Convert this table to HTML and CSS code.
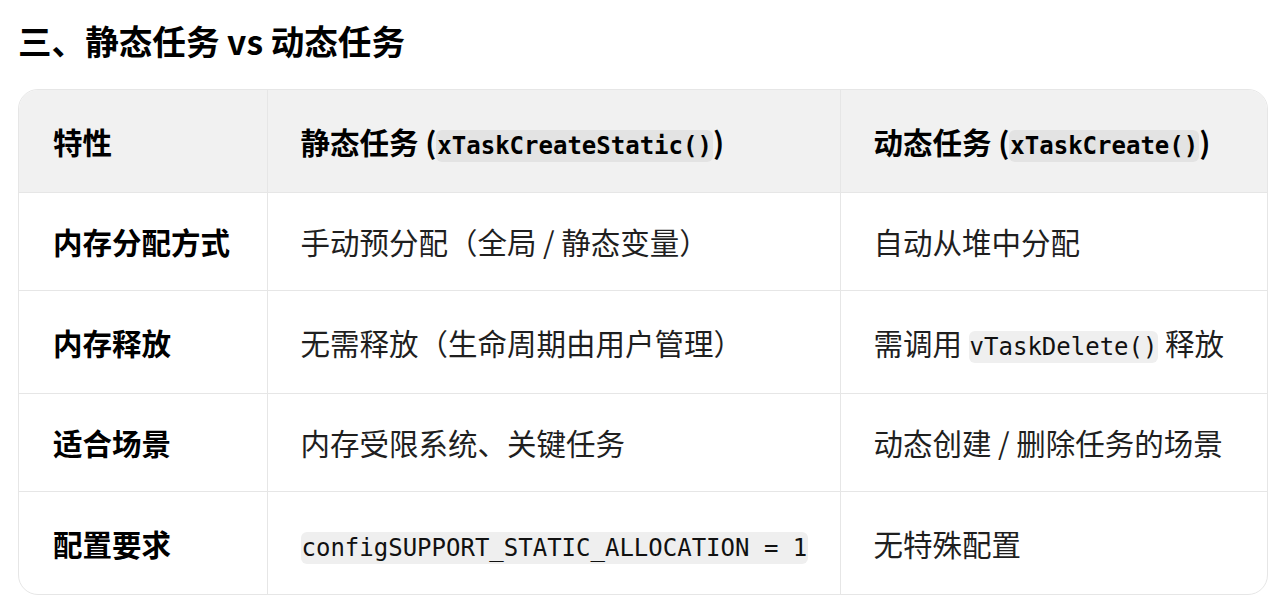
FILE: index.html
```html
<!DOCTYPE html>
<html lang="zh-CN">
<head>
<meta charset="utf-8">
<title>静态任务 vs 动态任务</title>
<link rel="stylesheet" href="styles.css">
</head>
<body>
<main class="page">
  <h2 class="title">三、静态任务 vs 动态任务</h2>
  <div class="table-wrap">
    <table class="cmp">
      <colgroup>
        <col class="c1">
        <col class="c2">
        <col class="c3">
      </colgroup>
      <thead>
        <tr class="code-row">
          <th>特性</th>
          <th>静态任务 (<code>xTaskCreateStatic()</code>)</th>
          <th>动态任务 (<code>xTaskCreate()</code>)</th>
        </tr>
      </thead>
      <tbody>
        <tr>
          <td class="key">内存分配方式</td>
          <td>手动预分配（全局 / 静态变量）</td>
          <td>自动从堆中分配</td>
        </tr>
        <tr class="code-row">
          <td class="key">内存释放</td>
          <td>无需释放（生命周期由用户管理）</td>
          <td>需调用 <code>vTaskDelete()</code> 释放</td>
        </tr>
        <tr>
          <td class="key">适合场景</td>
          <td>内存受限系统、关键任务</td>
          <td>动态创建 / 删除任务的场景</td>
        </tr>
        <tr class="code-row">
          <td class="key">配置要求</td>
          <td><code>configSUPPORT_STATIC_ALLOCATION = 1</code></td>
          <td>无特殊配置</td>
        </tr>
      </tbody>
    </table>
  </div>
</main>
</body>
</html>
```
FILE: styles.css
```css
html, body {
  margin: 0;
  padding: 0;
  background: #ffffff;
}

body {
  font-family: "Noto Sans CJK SC", "Noto Sans", sans-serif;
  color: #0d0d0d;
}

.page {
  padding: 15px 16px 0 18px;
}

.title {
  margin: 0;
  font-size: 33.6px;
  line-height: 51px;
  font-weight: 700;
  color: #000;
}

.table-wrap {
  margin-top: 23px;
  width: 1250px;
  border: 1px solid #e6e6e6;
  border-radius: 20px;
  overflow: hidden;
  box-sizing: border-box;
}

.cmp {
  width: 100%;
  border-collapse: collapse;
  table-layout: fixed;
  font-size: 29.5px;
  line-height: 42px;
}

.c1 { width: 248px; }
.c2 { width: 573px; }
.c3 { width: auto; }

.cmp th,
.cmp td {
  text-align: left;
  vertical-align: middle;
  padding: 27px 16px 28px 33px;
  border-left: 1px solid #e6e6e6;
  border-top: 1px solid #e6e6e6;
  white-space: nowrap;
}

.cmp th:first-child,
.cmp td:first-child {
  border-left: none;
  padding-left: 34px;
}

.cmp thead th {
  border-top: none;
  background: #f1f1f1;
  font-weight: 700;
  color: #000;
}

.cmp tr.code-row th,
.cmp tr.code-row td {
  padding-top: 30px;
  padding-bottom: 30px;
}

.cmp td {
  color: #1f1f1f;
}

.cmp td.key {
  font-weight: 700;
  color: #000;
}

code {
  font-family: "DejaVu Sans Mono", "Liberation Mono", monospace;
  font-size: 24px;
  line-height: 27px;
  padding: 2px 1px;
  border-radius: 6px;
  background: #efefef;
  color: #111;
}

thead code {
  background: #e3e3e3;
  font-weight: 700;
  color: #000;
}
```
